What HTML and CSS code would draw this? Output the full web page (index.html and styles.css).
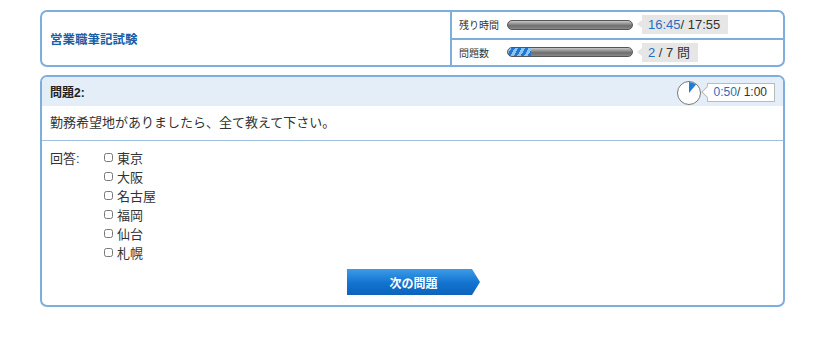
FILE: index.html
```html
<!DOCTYPE html>
<html lang="ja">
<head>
    <meta charset="UTF-8">
    <title>営業職筆記試験</title>
    <link rel="stylesheet" href="styles.css">
</head>
<body>
    <div class="panel status">
        <div class="exam-title">営業職筆記試験</div>
        <div class="meters">
            <div class="meter-row">
                <span class="meter-label">残り時間</span>
                <div class="bar"></div>
                <div class="tag"><span class="now">16:45</span>/ 17:55</div>
            </div>
            <div class="meter-row">
                <span class="meter-label">問題数</span>
                <div class="bar"><div class="fill" style="width: 23px"></div></div>
                <div class="tag"><span class="now">2</span> / 7 問</div>
            </div>
        </div>
    </div>

    <div class="panel question">
        <div class="q-head">
            <span class="q-num">問題2:</span>
            <div class="timer">
                <svg width="26" height="26" viewBox="0 0 26 26">
                    <circle cx="13" cy="13" r="11.5" fill="#fff" stroke="#777" stroke-width="1"/>
                    <path d="M13 13 L13 2 A11 11 0 0 1 20.1 4.6 Z" fill="#1f7fd6"/>
                </svg>
                <div class="timer-tag"><span class="now">0:50</span>/ 1:00</div>
            </div>
        </div>
        <div class="q-text">勤務希望地がありましたら、全て教えて下さい。</div>
        <div class="answers">
            <span class="ans-label">回答:</span>
            <div class="choices">
                <label><input type="checkbox"> 東京</label>
                <label><input type="checkbox"> 大阪</label>
                <label><input type="checkbox"> 名古屋</label>
                <label><input type="checkbox"> 福岡</label>
                <label><input type="checkbox"> 仙台</label>
                <label><input type="checkbox"> 札幌</label>
            </div>
        </div>
        <div class="actions">
            <button class="next">次の問題</button>
        </div>
    </div>
</body>
</html>
```

FILE: styles.css
```css
body {
    margin: 0;
    padding: 10px 0 0 40px;
    font-family: "Liberation Sans", "Noto Sans CJK JP", sans-serif;
    color: #333;
    background: #fff;
}
.panel {
    width: 741px;
    border: 2px solid #7eaedb;
    border-radius: 7px;
    background: #fff;
}
.status {
    display: flex;
    height: 53px;
}
.exam-title {
    box-sizing: border-box;
    width: 410px;
    border-right: 2px solid #7eaedb;
    display: flex;
    align-items: center;
    padding-left: 8px;
    font-size: 12.5px;
    font-weight: bold;
    color: #1a5ea6;
}
.meters {
    flex: 1;
    display: flex;
    flex-direction: column;
}
.meter-row {
    flex: 1;
    display: flex;
    align-items: center;
    padding-left: 7px;
}
.meter-row + .meter-row {
    border-top: 2px solid #7eaedb;
}
.meter-label {
    width: 48px;
    font-size: 10px;
    color: #333;
}
.bar {
    width: 124px;
    height: 8px;
    border: 1px solid #555;
    border-radius: 6px;
    background: linear-gradient(to bottom, #c8c8c8, #6e6e6e 60%, #8a8a8a);
    overflow: hidden;
}
.fill {
    height: 100%;
    border-radius: 6px 0 0 6px;
    background: repeating-linear-gradient(-60deg, #1f78d2 0 3px, #8cc4f4 3px 6px);
}
.tag {
    position: relative;
    margin-left: 9px;
    background: #e6e6e6;
    padding: 2px 8px 2px 6px;
    font-size: 13px;
    line-height: 15px;
    color: #333;
}
.tag::before {
    content: "";
    position: absolute;
    left: -5px;
    top: 5px;
    border-style: solid;
    border-width: 4px 5px 4px 0;
    border-color: transparent #e6e6e6 transparent transparent;
}
.now {
    color: #1f6fc2;
}
.question {
    margin-top: 8px;
    overflow: hidden;
}
.q-head {
    display: flex;
    align-items: center;
    justify-content: space-between;
    height: 29px;
    padding: 0 8px;
    background: #e4eef8;
}
.q-num {
    font-size: 12px;
    font-weight: bold;
    color: #222;
}
.timer {
    display: flex;
    align-items: center;
    padding-top: 2px;
}
.timer-tag {
    position: relative;
    margin-left: 5px;
    background: #fff;
    border: 1px solid #bbb;
    padding: 1px 7px 1px 6px;
    font-size: 12px;
    line-height: 15px;
    color: #333;
}
.timer-tag::before {
    content: "";
    position: absolute;
    left: -5px;
    top: 4px;
    width: 7px;
    height: 7px;
    background: #fff;
    border-left: 1px solid #bbb;
    border-bottom: 1px solid #bbb;
    transform: rotate(45deg);
}
.q-text {
    padding: 8px 8px 9px;
    font-size: 13px;
    line-height: 17px;
    border-bottom: 1px solid #9fbfde;
}
.answers {
    display: flex;
    padding: 7px 8px 0;
    font-size: 13px;
}
.ans-label {
    width: 52px;
}
.choices {
    display: flex;
    flex-direction: column;
}
.choices label {
    display: flex;
    align-items: center;
    height: 19px;
}
.choices input {
    width: 9px;
    height: 9px;
    margin: 0 4px 0 2px;
}
.actions {
    display: flex;
    justify-content: center;
    padding: 7px 0 10px 2px;
}
.next {
    width: 133px;
    height: 26px;
    border: none;
    background: linear-gradient(to bottom, #3c9be8, #1273cf 55%, #0d63bb);
    color: #fff;
    font-family: "Noto Sans CJK JP", sans-serif;
    font-size: 12px;
    font-weight: bold;
    padding-right: 6px;
    clip-path: polygon(0 0, 94% 0, 100% 50%, 94% 100%, 0 100%);
    cursor: pointer;
}
```
